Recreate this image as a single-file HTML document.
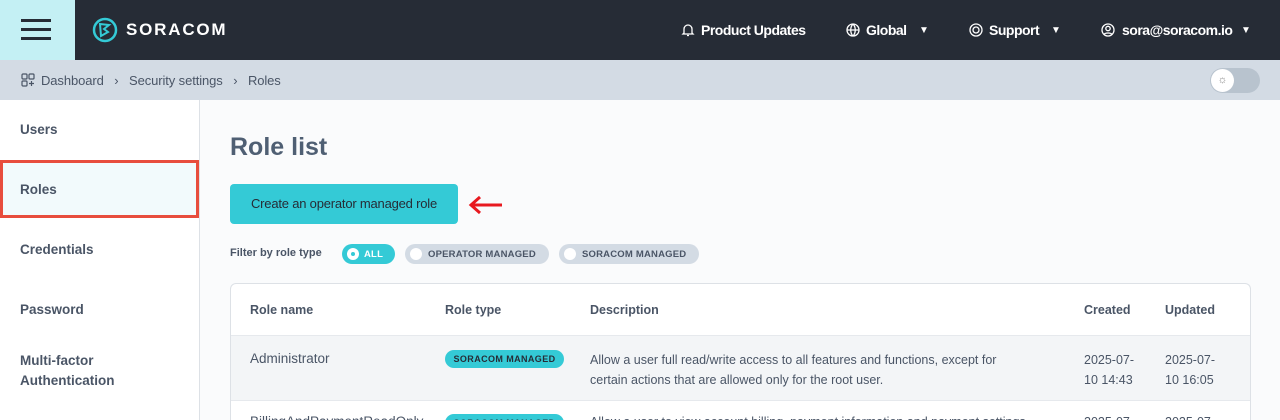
<!DOCTYPE html>
<html><head><meta charset="utf-8"><style>
*{box-sizing:border-box;margin:0;padding:0}
html,body{width:1280px;height:420px;overflow:hidden}
body{font-family:"Liberation Sans",sans-serif;background:#fafbfc;position:relative;color:#4a5566}
.hdr{position:absolute;left:0;top:0;width:1280px;height:60px;background:#262c36}
.ham{position:absolute;left:0;top:0;width:75px;height:60px;background:#c4f0f4}
.ham i{position:absolute;left:21px;width:30px;height:3px;background:#262c36}
.nav{position:absolute;top:22px;color:#fff;font-size:14px;font-weight:bold;letter-spacing:-0.5px}
.bc{position:absolute;left:0;top:60px;width:1280px;height:40px;background:#d3dbe4;font-size:13px;color:#4a5566}
.side{position:absolute;left:0;top:100px;width:200px;height:320px;background:#fff;border-right:1px solid #dde1e6}
.side div{position:absolute;left:20px;font-size:13.5px;font-weight:bold;color:#4a5566}
.pill{position:absolute;top:244px;height:20px;border-radius:10px;font-size:9.5px;font-weight:bold;letter-spacing:.2px;line-height:20px;white-space:nowrap}
.pill span{position:relative;top:1px}
.pill b{position:absolute;left:5px;top:4px;width:12px;height:12px;border-radius:50%;background:#fff}
.card{position:absolute;left:230px;top:283px;width:1021px;height:137px;border:1px solid #dde1e6;border-bottom:none;border-radius:6px 6px 0 0;background:#fff;overflow:hidden}
.th{position:absolute;top:19px;font-size:12.5px;font-weight:bold;color:#4a5566}
.td{position:absolute;font-size:12.5px;color:#4a5566;line-height:20px}
.badge{position:absolute;height:18px;border-radius:9px;background:#34cad6;font-size:9px;font-weight:bold;letter-spacing:.4px;color:#262c36;text-align:center;line-height:18px}
</style></head><body>
<div class="hdr">
<div class="ham"><i style="top:19px"></i><i style="top:28px"></i><i style="top:37px"></i></div>
<svg style="position:absolute;left:92px;top:17px" width="26" height="26" viewBox="0 0 26 26"><circle cx="13" cy="13" r="11" fill="none" stroke="#34cad6" stroke-width="2.5"/><path d="M8 7l9 1-5 4 4 3-7 4z" fill="none" stroke="#34cad6" stroke-width="2"/></svg>
<div style="position:absolute;left:126px;top:20px;color:#fff;font-size:17px;font-weight:bold;letter-spacing:1.8px">SORACOM</div>
<svg style="position:absolute;left:681px;top:23px" width="14" height="14" viewBox="0 0 14 14" fill="none" stroke="#fff" stroke-width="1.3"><path d="M3 10V6a4 4 0 0 1 8 0v4l1 1H2z M6 12.5h2"/></svg>
<div class="nav" style="left:701px">Product Updates</div>
<svg style="position:absolute;left:846px;top:23px" width="14" height="14" viewBox="0 0 14 14" fill="none" stroke="#fff" stroke-width="1.3"><circle cx="7" cy="7" r="6"/><path d="M1 7h12M7 1c-3 3-3 9 0 12M7 1c3 3 3 9 0 12"/></svg>
<div class="nav" style="left:866px">Global</div>
<div class="nav" style="left:919px;font-size:10px;top:25px">▼</div>
<svg style="position:absolute;left:969px;top:23px" width="14" height="14" viewBox="0 0 14 14" fill="none" stroke="#fff" stroke-width="1.3"><circle cx="7" cy="7" r="6"/><circle cx="7" cy="7" r="3"/></svg>
<div class="nav" style="left:989px">Support</div>
<div class="nav" style="left:1051px;font-size:10px;top:25px">▼</div>
<svg style="position:absolute;left:1101px;top:23px" width="14" height="14" viewBox="0 0 14 14" fill="none" stroke="#fff" stroke-width="1.3"><circle cx="7" cy="7" r="6"/><circle cx="7" cy="5.5" r="2.2"/><path d="M3 11.5c1-2 7-2 8 0"/></svg>
<div class="nav" style="left:1122px">sora@soracom.io</div>
<div class="nav" style="left:1241px;font-size:10px;top:25px">▼</div>
</div>
<div class="bc">
<svg style="position:absolute;left:21px;top:13px" width="14" height="14" viewBox="0 0 14 14" fill="none" stroke="#4a5566" stroke-width="1.2"><rect x="1" y="1" width="5" height="5" rx="1"/><rect x="8" y="1" width="5" height="5" rx="1"/><rect x="1" y="8" width="5" height="5" rx="1"/><path d="M10.5 8v5M8 10.5h5"/></svg>
<div style="position:absolute;left:41px;top:13px;letter-spacing:-0.1px">Dashboard&nbsp;&nbsp;&nbsp;›&nbsp;&nbsp;&nbsp;Security settings&nbsp;&nbsp;&nbsp;›&nbsp;&nbsp;&nbsp;Roles</div>
<div style="position:absolute;left:1210px;top:8px;width:50px;height:25px;border-radius:13px;background:#b8c3ce"></div>
<div style="position:absolute;left:1211px;top:9px;width:23px;height:23px;border-radius:50%;background:#fff;color:#888;font-size:11px;text-align:center;line-height:23px">☼</div>
</div>
<div class="side">
<div style="top:22px">Users</div>
<div style="left:0;top:60px;width:199px;height:58px;border:3px solid #e84d3d;background:#f2fafc"></div>
<div style="top:82px">Roles</div>
<div style="top:142px">Credentials</div>
<div style="top:202px">Password</div>
<div style="top:251px;line-height:20px">Multi-factor<br>Authentication</div>
</div>
<div style="position:absolute;left:230px;top:133px;font-size:25px;font-weight:bold;color:#4f5f73">Role list</div>
<div style="position:absolute;left:230px;top:184px;width:228px;height:40px;border-radius:4px;background:#34cad6;color:#262c36;font-size:13px;text-align:center;line-height:40px;letter-spacing:-0.2px">Create an operator managed role</div>
<svg style="position:absolute;left:468px;top:195px" width="36" height="20" viewBox="0 0 36 20"><path d="M34 10H4M12 2L3 10l9 8" fill="none" stroke="#e8191f" stroke-width="3"/></svg>
<div style="position:absolute;left:230px;top:247px;font-size:11px;font-weight:bold;color:#4a5566">Filter by role type</div>
<div class="pill" style="left:342px;width:53px;background:#34cad6;color:#fff;padding-left:22px"><b><i style="position:absolute;left:4px;top:4px;width:4px;height:4px;border-radius:50%;background:#34cad6"></i></b><span>ALL</span></div>
<div class="pill" style="left:405px;width:144px;background:#d3dbe4;color:#4a5566;padding-left:23px"><b></b><span>OPERATOR MANAGED</span></div>
<div class="pill" style="left:559px;width:140px;background:#d3dbe4;color:#4a5566;padding-left:23px"><b></b><span>SORACOM MANAGED</span></div>
<div class="card">
<div class="th" style="left:19px">Role name</div>
<div class="th" style="left:214px">Role type</div>
<div class="th" style="left:359px">Description</div>
<div class="th" style="left:853px">Created</div>
<div class="th" style="left:934px">Updated</div>
<div style="position:absolute;left:0;top:51px;width:1021px;height:66px;background:#f3f5f7;border-top:1px solid #e6e9ed;border-bottom:1px solid #e6e9ed"></div>
<div class="td" style="left:19px;top:65px;font-size:13.5px">Administrator</div>
<div class="badge" style="left:214px;top:66px;width:119px">SORACOM MANAGED</div>
<div class="td" style="left:359px;top:66px">Allow a user full read/write access to all features and functions, except for<br>certain actions that are allowed only for the root user.</div>
<div class="td" style="left:853px;top:66px">2025-07-<br>10 14:43</div>
<div class="td" style="left:934px;top:66px">2025-07-<br>10 16:05</div>
<div class="td" style="left:19px;top:128px;font-size:13.5px">BillingAndPaymentReadOnly</div>
<div class="badge" style="left:214px;top:130px;width:119px">SORACOM MANAGED</div>
<div class="td" style="left:359px;top:128px">Allow a user to view account billing, payment information and payment settings</div>
<div class="td" style="left:853px;top:128px">2025-07-</div>
<div class="td" style="left:934px;top:128px">2025-07-</div>
</div>
</body></html>
